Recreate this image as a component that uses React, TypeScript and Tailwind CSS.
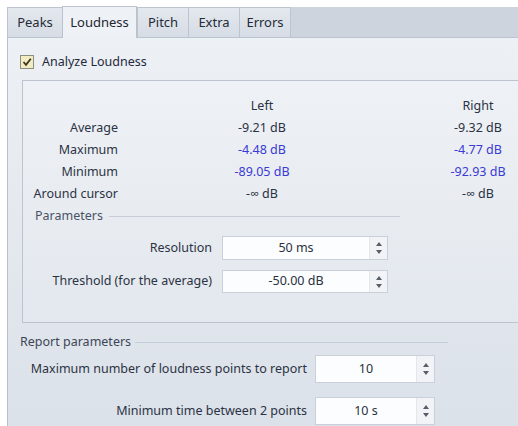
import React from "react";

const tabs = ["Peaks", "Loudness", "Pitch", "Extra", "Errors"];
const tabWidths = ["w-[55px]", "w-[75px]", "w-[51px]", "w-[51px]", "w-[52px]"];

const rows = [
  { label: "Average", left: "-9.21 dB", right: "-9.32 dB", blue: false },
  { label: "Maximum", left: "-4.48 dB", right: "-4.77 dB", blue: true },
  { label: "Minimum", left: "-89.05 dB", right: "-92.93 dB", blue: true },
  { label: "Around cursor", left: "-∞ dB", right: "-∞ dB", blue: false },
];

function Spin() {
  return (
    <div className="w-[18px] h-full flex flex-col items-center justify-center gap-[4px] border-l border-[#e3e7ec] bg-[#f1f3f6]">
      <svg width="6" height="4" viewBox="0 0 6 4">
        <path d="M3 0 L6 4 L0 4 Z" fill="#555d6a" />
      </svg>
      <svg width="6" height="4" viewBox="0 0 6 4">
        <path d="M0 0 L6 0 L3 4 Z" fill="#555d6a" />
      </svg>
    </div>
  );
}

function Field({ value, w, h }: { value: string; w: string; h: string }) {
  return (
    <div className={`${w} ${h} flex border border-[#c9d0d9] bg-[#fcfdfe]`}>
      <div className="flex-1 flex items-center justify-center text-[#2a3140]">
        {value}
      </div>
      <Spin />
    </div>
  );
}

export default function App() {
  return (
    <div
      className="w-[518px] h-[426px] overflow-hidden bg-white text-[12.5px] text-[#2b3343]"
      style={{ fontFamily: '"Noto Sans", "Open Sans", sans-serif' }}
    >
      <div className="pt-[7px] pl-[7px]">
        {/* tab strip */}
        <div className="flex h-[31px] w-[560px] text-[13px]">
          {tabs.map((t, i) =>
            i === 1 ? (
              <div
                key={t}
                className={`${tabWidths[i]} -mt-[1px] h-[32px] flex items-center justify-center border-t border-l border-r border-[#b9c2cd] bg-[#eef1f5] text-[#1f2633]`}
              >
                {t}
              </div>
            ) : (
              <div
                key={t}
                className={`${tabWidths[i]} h-full flex items-center justify-center border-t border-l border-b border-[#bcc4cf] bg-linear-to-b from-[#e4e8ee] to-[#d6dce5] text-[#242b38] ${i === 4 ? "border-r" : ""}`}
              >
                {t}
              </div>
            )
          )}
          <div className="flex-1 h-full border-b border-[#bcc4cf] bg-[#cdd4de]" />
        </div>

        {/* panel */}
        <div className="w-[560px] h-[400px] border-l border-[#b7bfca] bg-linear-to-b from-[#edf0f4] to-[#dbe1e9] pl-[12px] pt-[17px]">
          <div className="flex items-center gap-[8px] h-[14px]">
            <div className="w-[14px] h-[14px] flex items-center justify-center border border-[#8b8f80] bg-[#f3ecc2]">
              <svg width="10" height="10" viewBox="0 0 10 10">
                <path d="M1.5 5 L4 7.8 L8.8 1.8" fill="none" stroke="#3a3320" strokeWidth="1.8" />
              </svg>
            </div>
            <span className="text-[#1f2a3c]">Analyze Loudness</span>
          </div>

          {/* results group */}
          <div className="mt-[11px] ml-[2px] h-[243px] border-t border-l border-b border-[#bcc4cf] bg-linear-to-b from-[#eef1f5] to-[#e3e8ee] pt-[14px]">
            <div className="grid grid-cols-[95px_288px_144px] leading-[22px]">
              <div />
              <div className="text-center">Left</div>
              <div className="text-center">Right</div>
              {rows.map((r) => (
                <React.Fragment key={r.label}>
                  <div className="text-right">{r.label}</div>
                  <div className={`text-center ${r.blue ? "text-[#3a3ad4]" : ""}`}>{r.left}</div>
                  <div className={`text-center ${r.blue ? "text-[#3a3ad4]" : ""}`}>{r.right}</div>
                </React.Fragment>
              ))}
            </div>

            <div className="flex items-center h-[22px] w-[377px] pl-[12px] gap-[6px]">
              <span className="text-[#4a5364]">Parameters</span>
              <div className="flex-1 h-px bg-[#c6cdd6]" />
            </div>

            <div className="mt-[9px] flex items-center">
              <div className="w-[189px] text-right">Resolution</div>
              <div className="ml-[10px]">
                <Field value="50 ms" w="w-[166px]" h="h-[24px]" />
              </div>
            </div>
            <div className="mt-[10px] flex items-center">
              <div className="w-[189px] text-right">Threshold (for the average)</div>
              <div className="ml-[10px]">
                <Field value="-50.00 dB" w="w-[166px]" h="h-[23px]" />
              </div>
            </div>
          </div>

          {/* report parameters */}
          <div className="mt-[11px] flex items-center h-[16px] w-[428px] gap-[4px]">
            <span className="text-[#3d4657]">Report parameters</span>
            <div className="flex-1 h-px bg-[#c6cdd6]" />
          </div>
          <div className="mt-[5px] flex items-center">
            <div className="w-[287px] text-right">Maximum number of loudness points to report</div>
            <div className="ml-[8px]">
              <Field value="10" w="w-[120px]" h="h-[28px]" />
            </div>
          </div>
          <div className="mt-[14px] flex items-center">
            <div className="w-[287px] text-right">Minimum time between 2 points</div>
            <div className="ml-[8px]">
              <Field value="10 s" w="w-[120px]" h="h-[28px]" />
            </div>
          </div>
        </div>
      </div>
    </div>
  );
}
